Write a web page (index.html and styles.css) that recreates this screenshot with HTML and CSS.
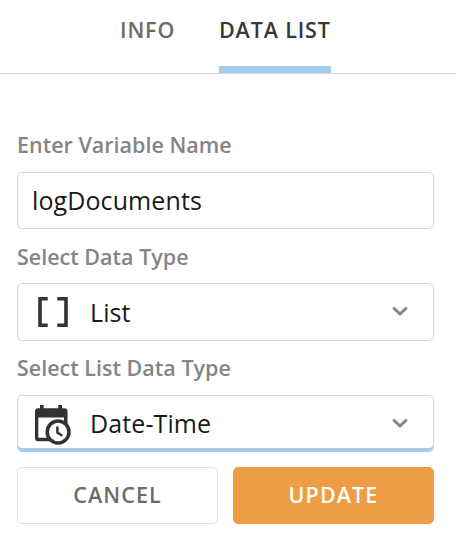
FILE: index.html
```html
<!DOCTYPE html>
<html lang="en">
<head>
<meta charset="utf-8">
<title>Data List</title>
<link rel="stylesheet" href="styles.css">
</head>
<body>
<nav class="tabs">
  <a class="tab">INFO</a>
  <a class="tab active">DATA LIST</a>
</nav>
<form class="form">
  <label class="label">Enter Variable Name</label>
  <div class="field text"><span class="value">logDocuments</span></div>
  <label class="label data-type-label">Select Data Type</label>
  <div class="field select data-type">
    <svg class="icon" width="40" height="42" viewBox="0 0 40 42"><path d="M15.7 7.8H8V34.2H15.7M25.3 7.8H34V34.2H25.3" fill="none" stroke="#333" stroke-width="3.6"/></svg>
    <span class="value">List</span>
    <svg class="chevron" width="18" height="12" viewBox="0 0 18 12"><path d="M2.2 1.7L9 8L15.8 1.7" fill="none" stroke="#888" stroke-width="3"/></svg>
  </div>
  <label class="label">Select List Data Type</label>
  <div class="field select focused">
    <svg class="icon" width="40" height="42" viewBox="0 0 40 42">
      <path d="M8 2H11.7V5.3H26.3V2H30V5.3H32.5Q35.5 5.3 35.5 8.3V31H32V14.5H6.3V34.7H20V38.2H6Q3 38.2 3 35.2V8.3Q3 5.3 6 5.3H8Z" fill="#333"/>
      <circle cx="26.1" cy="29" r="10.9" fill="#fff" stroke="#333" stroke-width="3.5"/>
      <path d="M25.4 23.5V29.5L30.3 32.8" fill="none" stroke="#333" stroke-width="2.5"/>
    </svg>
    <span class="value">Date-Time</span>
    <svg class="chevron" width="18" height="12" viewBox="0 0 18 12"><path d="M2.2 1.7L9 8L15.8 1.7" fill="none" stroke="#888" stroke-width="3"/></svg>
  </div>
  <div class="actions">
    <button type="button" class="button cancel">CANCEL</button>
    <button type="button" class="button update">UPDATE</button>
  </div>
</form>
</body>
</html>
```
FILE: styles.css
```css
* {
  box-sizing: border-box;
}

body {
  margin: 0;
  background: #fff;
  font-family: "Open Sans", sans-serif;
}

.tabs {
  display: flex;
  height: 74px;
  padding-left: 120px;
  border-bottom: 1px solid #d6d6d6;
}

.tab {
  width: 99px;
  height: 73px;
  padding-top: 15px;
  font-size: 21.5px;
  line-height: 30px;
  font-weight: 600;
  letter-spacing: 0.85px;
  white-space: nowrap;
  color: #6b6b6b;
}

.tab.active {
  width: 112px;
  color: #383838;
  border-bottom: 7px solid #a3cbec;
}

.form {
  display: grid;
  grid-template-rows: 42px 57px 54px 58px 54px 57px;
  padding: 56px 22px 0 17px;
}

.label {
  align-self: end;
  padding-bottom: 12px;
  font-size: 21.5px;
  line-height: 30px;
  font-weight: 600;
  color: #858585;
}

.data-type-label {
  padding-bottom: 11px;
}

.field {
  display: flex;
  align-items: center;
  border: 1px solid #d6d6d6;
  border-radius: 5px;
  padding: 0 24px 0 14px;
}

.focused {
  box-shadow: inset 0 -3px 0 #a3cbec;
  border-bottom-color: #afcce4;
}

.value {
  flex: 1;
  padding-bottom: 2px;
  font-size: 25px;
  line-height: 34px;
  letter-spacing: 0.1px;
  color: #1a1a1a;
}

.data-type .value {
  padding-bottom: 0;
}

.icon {
  margin-right: 18px;
}

.actions {
  display: grid;
  grid-template-columns: 1fr 1fr;
  gap: 15px;
  margin-top: 15px;
}

.button {
  height: 57px;
  padding: 0 0 2px;
  border: 1px solid #e1e1e1;
  border-radius: 5px;
  background: #fff;
  font: 600 21.5px/30px "Open Sans", sans-serif;
  letter-spacing: 1.1px;
  color: #6b6b6b;
}

.update {
  border-color: #ee9d44;
  background: #ee9d44;
  color: #fff;
}
```
